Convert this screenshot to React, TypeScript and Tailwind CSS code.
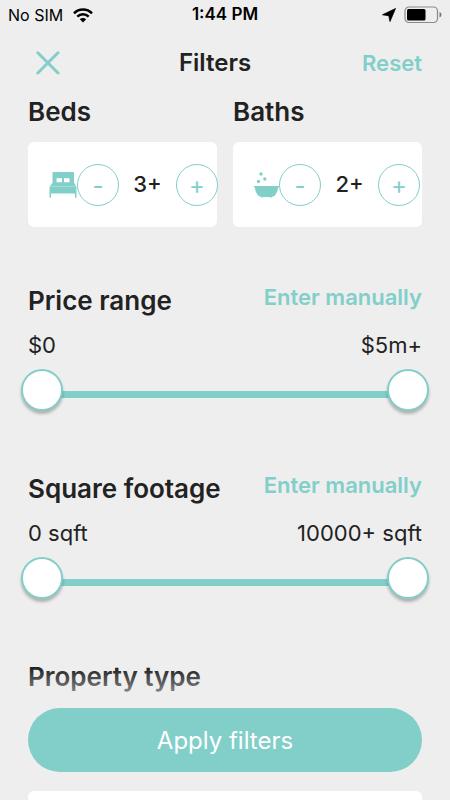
import React, { useState } from "react";

const BedIcon: React.FC = () => (
  <svg className="w-7 h-[26px] shrink-0" viewBox="0 0 28 26" fill="#82cfca" aria-hidden="true">
    <path
      fillRule="evenodd"
      d="M4.500 0h19.500a1 1 0 0 1 1 1v10.500H3.500V1a1 1 0 0 1 1-1zM7.500 6.300v4h5.500v-4zM15 6.300v4h5.500v-4z"
    />
    <path d="M3.300 11h21.900l2.300 4v10.800h-1.500v-4.300H2v4.300H.5V15z" />
    <path d="M2 14.300h24.500" stroke="#fff" strokeWidth=".6" opacity=".6" />
  </svg>
);

const BathIcon: React.FC = () => (
  <svg className="w-[25px] h-[26px] shrink-0" viewBox="0 0 25 26" fill="#82cfca" aria-hidden="true">
    <circle cx="7" cy="2" r="1.700" />
    <circle cx="10.800" cy="7" r="1.700" />
    <circle cx="4.500" cy="9.500" r="1.700" />
    <path d="M0 14h25v1.600h-.9c-.3 3.200-1.300 5.800-3 7.600-.7.800-1.600 1.300-2.700 1.400a1.500 1.500 0 0 1-2.700.3H9.300a1.500 1.500 0 0 1-2.700-.3c-1.100-.1-2-.6-2.700-1.400-1.700-1.800-2.700-4.400-3-7.600H0z" />
  </svg>
);

const WifiIcon: React.FC = () => (
  <svg className="w-5 h-[15px]" viewBox="0 0 20 15" fill="none" stroke="#000" strokeWidth="2.500" aria-hidden="true">
    <path d="M1 5.300a12.800 12.800 0 0 1 18 0" />
    <path d="M4.300 8.600a8.100 8.100 0 0 1 11.400 0" />
    <path d="M10 14.500 6.800 11.300a4.600 4.600 0 0 1 6.400 0z" fill="#000" stroke="none" />
  </svg>
);

const StatusBar: React.FC = () => (
  <div className="grid grid-cols-3 items-center h-7 px-2 pt-0.5 text-base text-black">
    <div className="flex items-center gap-2.5 whitespace-nowrap">
      <span>No SIM</span>
      <WifiIcon />
    </div>
    <span className="text-center text-[17px] font-semibold">1:44 PM</span>
    <div className="flex items-center justify-end gap-2">
      <svg className="w-[14px] h-[14px]" viewBox="0 0 14 14" aria-hidden="true">
        <path d="M13.500.5 8 13.500 6.800 7.700.5 6.800z" fill="#000" stroke="#000" strokeWidth=".8" strokeLinejoin="round" />
      </svg>
      <svg className="w-[38px] h-[18px]" viewBox="0 0 38 18" aria-hidden="true">
        <rect x="1" y="1" width="32.500" height="15.500" rx="4" fill="none" stroke="#8a8a8a" strokeWidth="1.200" />
        <rect x="3" y="3" width="18.500" height="11.500" rx="1.500" fill="#000" />
        <path d="M35.500 6c2.600.8 2.600 4.700 0 5.500z" fill="#777" />
      </svg>
    </div>
  </div>
);

const roundButton =
  "w-[42px] h-[42px] pt-0.5 shrink-0 rounded-full border border-[#82cfca] bg-white text-[#82cfca] text-2xl leading-6 flex items-center justify-center";

interface CounterProps {
  label: string;
  icon: React.ReactNode;
  initial: number;
}

const Counter: React.FC<CounterProps> = ({ label, icon, initial }) => {
  const [count, setCount] = useState(initial);

  return (
    <section className="flex-1 min-w-0">
      <h2 className="text-[26px] leading-10 font-semibold">{label}</h2>
      <div className="mt-[10px] h-[85px] pl-[21px] flex items-center bg-white rounded-md">
        {icon}
        <button className={roundButton} aria-label={`Fewer ${label}`} onClick={() => setCount(Math.max(0, count - 1))}>
          -
        </button>
        <span className="w-[57px] shrink-0 text-center text-[22px] font-medium">{count}+</span>
        <button className={roundButton} aria-label={`More ${label}`} onClick={() => setCount(count + 1)}>
          +
        </button>
      </div>
    </section>
  );
};

const rangeInput =
  "absolute inset-0 w-full h-full appearance-none bg-transparent pointer-events-none [&::-webkit-slider-thumb]:appearance-none [&::-webkit-slider-thumb]:pointer-events-auto [&::-webkit-slider-thumb]:w-[42px] [&::-webkit-slider-thumb]:h-[42px] [&::-webkit-slider-thumb]:rounded-full [&::-webkit-slider-thumb]:bg-white [&::-webkit-slider-thumb]:border-2 [&::-webkit-slider-thumb]:border-[#82cfca] [&::-webkit-slider-thumb]:shadow-[0_3px_3px_rgba(0,0,0,0.25)]";

interface RangeFilterProps {
  title: string;
  max: number;
  format: (value: number) => string;
}

const RangeFilter: React.FC<RangeFilterProps> = ({ title, max, format }) => {
  const [low, setLow] = useState(0);
  const [high, setHigh] = useState(max);

  return (
    <section className="h-[188px]">
      <div className="flex justify-between">
        <h2 className="text-[26px] leading-10 font-semibold">{title}</h2>
        <button className="h-8 text-[22px] font-semibold text-[#82cfca]">Enter manually</button>
      </div>
      <div className="mt-2 flex justify-between text-[22px] leading-8">
        <span>{format(low)}</span>
        <span>{format(high)}</span>
      </div>
      <div className="relative -mx-[7px] mt-2 h-[42px] flex items-center">
        <div className="flex-1 mx-5 mt-2 h-[7px] bg-[#82cfca]" />
        <input
          type="range"
          className={rangeInput}
          aria-label={`${title} minimum`}
          max={max}
          value={low}
          onChange={(e) => setLow(Math.min(Number(e.target.value), high))}
        />
        <input
          type="range"
          className={rangeInput}
          aria-label={`${title} maximum`}
          max={max}
          value={high}
          onChange={(e) => setHigh(Math.max(Number(e.target.value), low))}
        />
      </div>
    </section>
  );
};

const App: React.FC = () => {
  return (
    <div className="relative h-screen flex flex-col overflow-hidden bg-[#eeeeee] text-[#222222] font-['Inter','Liberation_Sans',sans-serif]">
      <StatusBar />
      <header className="flex items-center justify-between h-16 px-7 pt-1.5 shrink-0">
        <button aria-label="Close" className="w-10 pl-2">
          <svg className="w-6 h-6" viewBox="0 0 24 24" stroke="#82cfca" strokeWidth="3" strokeLinecap="round" aria-hidden="true">
            <path d="M1.800 1.800 22 22M22 1.800 1.800 22" />
          </svg>
        </button>
        <h1 className="text-2xl font-semibold">Filters</h1>
        <button className="text-[22px] font-semibold text-[#82cfca]">Reset</button>
      </header>

      <main className="flex-1 min-h-0 px-7 overflow-y-auto overflow-x-hidden [scrollbar-width:none]">
        <div className="flex gap-4">
          <Counter label="Beds" icon={<BedIcon />} initial={3} />
          <Counter label="Baths" icon={<BathIcon />} initial={2} />
        </div>
        <div className="mt-[54px]">
          <RangeFilter title="Price range" max={5} format={(v) => (v === 5 ? "$5m+" : v === 0 ? "$0" : `$${v}m`)} />
          <RangeFilter title="Square footage" max={10000} format={(v) => (v === 10000 ? "10000+ sqft" : `${v} sqft`)} />
        </div>
        <section>
          <h2 className="text-[26px] leading-10 font-semibold">Property type</h2>
          <div className="mt-[94px] h-40 bg-white rounded-md" />
        </section>
      </main>

      <footer className="absolute inset-x-0 bottom-0 px-7 pb-7">
        <div className="-mx-7 h-10 bg-gradient-to-b from-[#eeeeee]/0 to-[#eeeeee]/80 pointer-events-none" />
        <button className="w-full h-16 pt-0.5 rounded-full bg-[#82cfca] text-white text-2xl">Apply filters</button>
      </footer>
    </div>
  );
};

export default App;
